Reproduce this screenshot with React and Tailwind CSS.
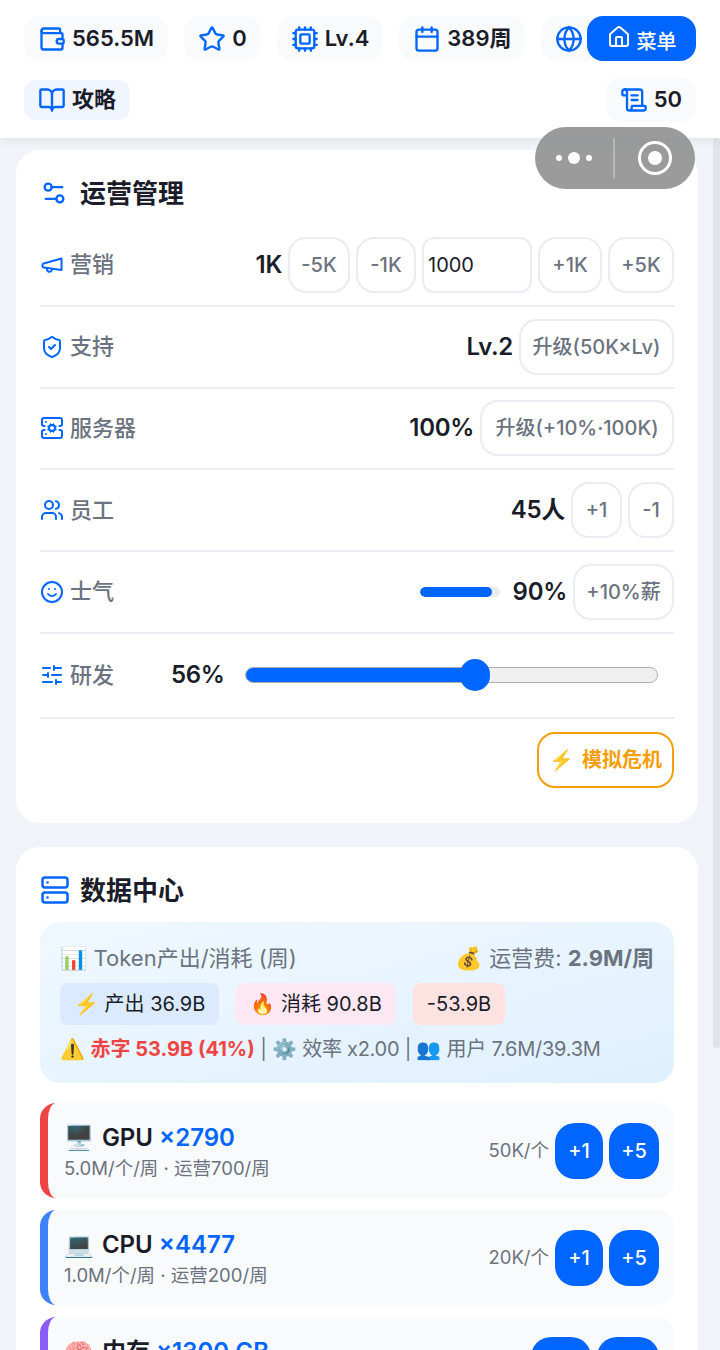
import React from 'react';
import {
  Wallet, Star, Cpu, Calendar, Globe, House, BookOpen, ScrollText, Settings2,
  ShieldCheck, ServerCog, Users, Smile, SlidersHorizontal, Server,
} from 'lucide-react';

const font = "font-['Inter','Noto_Sans_CJK_SC','Noto_Color_Emoji',sans-serif]";

// lucide's megaphone has a different shape, so this one is drawn by hand
const Horn = ({ size = 24, strokeWidth = 2, className = '' }) => (
  <svg width={size} height={size} viewBox="0 0 24 24" fill="none" stroke="currentColor" strokeWidth={strokeWidth} strokeLinecap="round" strokeLinejoin="round" className={className}>
    <path d="M21.5 5.5v11.5L4 14.5a1.5 1.5 0 0 1-1.5-1.5v-1a1.5 1.5 0 0 1 1.2-1.5z" />
    <path d="M7 15v1a2.5 2.5 0 0 0 5 .5V16" />
  </svg>
);

const StatPill = ({ icon: Icon, children }) => (
  <div className="flex h-[45px] shrink-0 items-center gap-1.5 rounded-2xl bg-[#f8fafc] px-[14px] text-[22px] font-semibold text-[#1a1d29]">
    <Icon size={28} strokeWidth={2} className="text-[#0066ff]" />
    {children}
  </div>
);

const GhostBtn = ({ children, className = '' }) => (
  <button className={`flex h-14 shrink-0 items-center justify-center rounded-[18px] border-2 border-[#e8edf3] bg-white text-xl font-medium whitespace-nowrap text-[#6b7280] ${className}`}>
    {children}
  </button>
);

const Row = ({ icon: Icon, label, children }) => (
  <div className="flex h-[81.75px] items-center justify-between border-b-2 border-[#e8edf3]">
    <div className="flex items-center gap-1.5 text-[22px] font-medium text-[#6b7280]">
      <Icon size={24} strokeWidth={2} className="text-[#0066ff]" />
      {label}
    </div>
    <div className="flex items-center gap-1.5">{children}</div>
  </div>
);

const Value = ({ children }) => (
  <span className="text-2xl font-semibold tracking-[-0.3px] text-[#1a1d29]">{children}</span>
);

const HardwareRow = ({ color, emoji, name, count, sub, price, widths = ['w-12', 'w-[50px]'], gap = 'gap-1.5' }) => (
  <div className={`mb-3 flex h-[95px] items-center justify-between rounded-2xl border-l-[8px] bg-[#f8fafc] pr-[15px] pl-4 ${color}`}>
    <div className="pt-0.5">
      <div className="flex items-center gap-2 text-2xl leading-8 font-semibold text-[#1a1d29]">
        <span>{emoji}</span>
        <span>{name} <span className="text-[#0066ff]">{count}</span></span>
      </div>
      <div className="text-[18.5px] leading-7 text-[#6b7280]">{sub}</div>
    </div>
    <div className={`flex items-center ${gap}`}>
      <span className="text-[18.5px] text-[#6b7280]">{price}</span>
      <button className={`h-14 rounded-[20px] bg-[#0066ff] text-xl font-medium text-white ${widths[0]}`}>+1</button>
      <button className={`h-14 rounded-[20px] bg-[#0066ff] text-xl font-medium text-white ${widths[1]}`}>+5</button>
    </div>
  </div>
);

export default function App() {
  return (
    <div className={`relative h-[1350px] w-[720px] overflow-hidden bg-[#f0f4f8] ${font}`}>
      {/* Top stats */}
      <header className="relative z-10 h-[138px] bg-white px-6 pt-4 shadow-[0_2px_10px_rgba(0,0,0,0.07)]">
        <div className="flex gap-4 overflow-hidden">
          <StatPill icon={Wallet}>565.5M</StatPill>
          <StatPill icon={Star}>0</StatPill>
          <StatPill icon={Cpu}>Lv.4</StatPill>
          <StatPill icon={Calendar}>389周</StatPill>
          <StatPill icon={Globe}>7.6M</StatPill>
        </div>
        <div className="mt-4 flex items-center justify-between">
          <div className="flex h-10 items-center gap-1.5 rounded-xl bg-[#f0f5ff] px-[14px] text-[22px] font-semibold text-[#1a1d29]">
            <BookOpen size={28} className="text-[#0066ff]" />
            攻略
          </div>
          <StatPill icon={ScrollText}>50</StatPill>
        </div>
        <button className="absolute top-4 right-6 flex h-[45px] w-[109px] items-center justify-center gap-1.5 rounded-2xl bg-[#0066ff] text-xl font-medium text-white">
          <House size={24} className="-mt-1" />
          <span className="pt-1.5">菜单</span>
        </button>
      </header>

      {/* WeChat capsule */}
      <div className="absolute top-[127px] left-[535px] z-20 flex h-[62px] w-[160px] items-center rounded-full bg-[#8a8a8a]/85">
        <div className="flex w-[78px] items-center justify-center gap-1.5">
          <span className="h-1.5 w-1.5 rounded-full bg-white" />
          <span className="h-3 w-3 rounded-full bg-white" />
          <span className="h-1.5 w-1.5 rounded-full bg-white" />
        </div>
        <div className="h-10 w-0.5 bg-white/30" />
        <div className="flex flex-1 items-center justify-center">
          <div className="flex h-[34px] w-[34px] items-center justify-center rounded-full border-[3px] border-white">
            <div className="h-3.5 w-3.5 rounded-full bg-white" />
          </div>
        </div>
      </div>

      {/* scrollbar thumb */}
      <div className="absolute top-[138px] right-0 h-[910px] w-[7px] rounded-full bg-[#dfe4ea]" />

      <main className="pt-3 pr-[22px] pl-4">
        {/* Operations */}
        <section className="h-[673px] rounded-3xl bg-white px-6 pt-6">
          <h2 className="flex h-9 items-center gap-3 pt-0.5 text-[26px] font-bold text-[#1a1d29]">
            <Settings2 size={28} className="text-[#0066ff]" />
            运营管理
          </h2>
          <div className="mt-[15px]">
            <Row icon={Horn} label="营销">
              <Value>1K</Value>
              <GhostBtn className="w-[62px]">-5K</GhostBtn>
              <GhostBtn className="w-[60px]">-1K</GhostBtn>
              <input readOnly value="1000" className="h-14 w-[110px] rounded-xl border-2 border-[#e8edf3] px-1 text-xl text-[#1a1d29]" />
              <GhostBtn className="w-[64px]">+1K</GhostBtn>
              <GhostBtn className="w-[66px]">+5K</GhostBtn>
            </Row>
            <Row icon={ShieldCheck} label="支持">
              <Value>Lv.2</Value>
              <GhostBtn className="w-[155px]">升级(50K×Lv)</GhostBtn>
            </Row>
            <Row icon={ServerCog} label="服务器">
              <Value>100%</Value>
              <GhostBtn className="w-[194px]">升级(+10%·100K)</GhostBtn>
            </Row>
            <Row icon={Users} label="员工">
              <Value>45人</Value>
              <GhostBtn className="w-[51px]">+1</GhostBtn>
              <GhostBtn className="w-[46px]">-1</GhostBtn>
            </Row>
            <Row icon={Smile} label="士气">
              <div className="mr-[7px] h-2.5 w-20 overflow-hidden rounded-full bg-[#e8edf3]">
                <div className="h-full w-[90%] rounded-full bg-[#0066ff]" />
              </div>
              <Value>90%</Value>
              <GhostBtn className="w-[101px]">+10%薪</GhostBtn>
            </Row>
            <div className="flex h-[85px] items-center border-b-2 border-[#e8edf3]">
              <div className="flex w-[131px] items-center gap-1.5 text-[22px] font-medium text-[#6b7280]">
                <SlidersHorizontal size={24} className="text-[#0066ff]" />
                研发
              </div>
              <Value>56%</Value>
              <div className="relative mr-4 ml-5 h-4 flex-1 rounded-full border border-[#b0b0b0] bg-[#efefef]">
                <div className="h-full w-[56%] rounded-full bg-[#0066ff]" />
                <div className="absolute top-1/2 left-[52%] h-8 w-[30px] -translate-y-1/2 rounded-full bg-[#0066ff]" />
              </div>
            </div>
          </div>
          <div className="mt-[13px] flex justify-end">
            <button className="flex h-14 w-[137px] items-center justify-center gap-2 rounded-[18px] border-2 border-[#f59e0b] text-xl font-semibold text-[#f59e0b]">
              <span>⚡</span>模拟危机
            </button>
          </div>
        </section>

        {/* Data center */}
        <section className="mt-6 rounded-3xl bg-white px-6 pt-6">
          <h2 className="flex h-9 items-center gap-2.5 pt-0.5 text-[26px] font-bold text-[#1a1d29]">
            <Server size={30} className="text-[#0066ff]" />
            数据中心
          </h2>
          <div className="mt-[15px] h-[161px] rounded-[20px] bg-gradient-to-br from-[#f0f8ff] to-[#e0f0ff] px-5 pt-5">
            <div className="flex items-center justify-between text-[22px] text-[#6b7280]">
              <span>📊 Token产出/消耗 (周)</span>
              <span>💰 运营费: <b>2.9M/周</b></span>
            </div>
            <div className="mt-2 flex gap-[17px] text-xl text-[#1a1d29]">
              <span className="flex h-[42px] items-center rounded-lg bg-[#dbeafe] px-[14px]">⚡ 产出 36.9B</span>
              <span className="flex h-[42px] items-center rounded-lg bg-[#fce7f3] px-[14px]">🔥 消耗 90.8B</span>
              <span className="flex h-[42px] items-center rounded-lg bg-[#fee2e2] px-[14px]">-53.9B</span>
            </div>
            <div className="mt-2.5 text-xl text-[#6b7280]">
              ⚠️ <b className="text-[#ef4444]">赤字 53.9B (41%)</b>{' '}
              <span className="tracking-[-0.25px]">| ⚙️ 效率 x2.00 | 👥 用户 7.6M/39.3M</span>
            </div>
          </div>
          <div className="mt-5">
            <HardwareRow color="border-[#ef4444]" emoji="🖥️" name="GPU" count="×2790" sub="5.0M/个/周 · 运营700/周" price="50K/个" />
            <HardwareRow color="border-[#3b82f6]" emoji="💻" name="CPU" count="×4477" sub="1.0M/个/周 · 运营200/周" price="20K/个" />
            <HardwareRow color="border-[#8b5cf6]" emoji="🧠" name="内存" count="×1300 GB" sub={'\u00a0'} price="" widths={['w-[60px]', 'w-[62px]']} />
          </div>
        </section>
      </main>
    </div>
  );
}
